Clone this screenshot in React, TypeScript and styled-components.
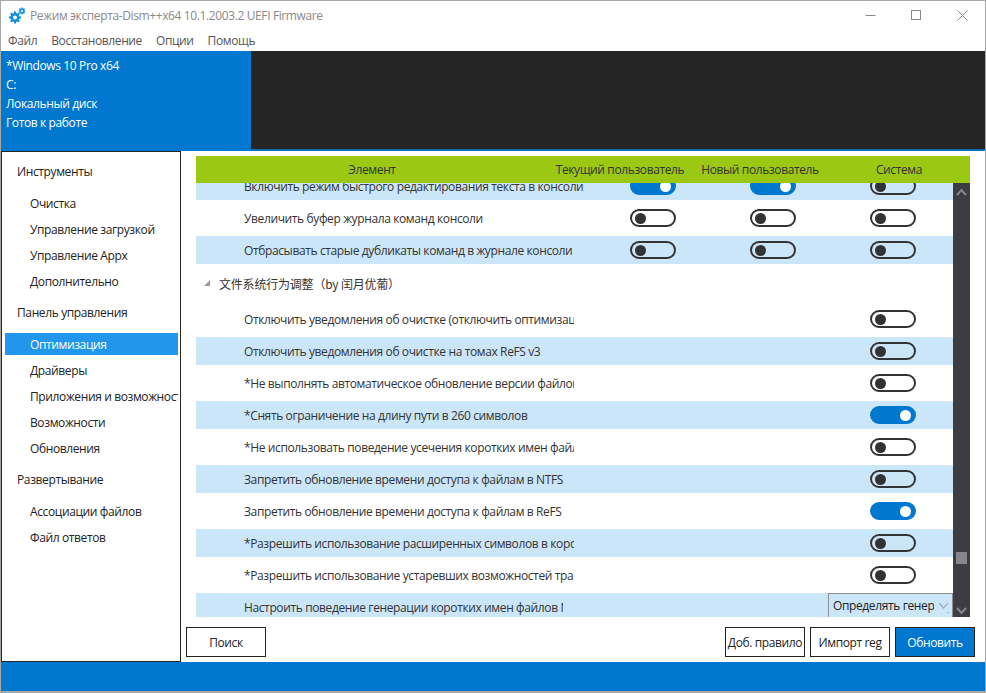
import React from "react";
import styled, { createGlobalStyle } from "styled-components";

const Global = createGlobalStyle`
  html, body { margin: 0; padding: 0; background: #fff; }
  body { font-family: "Open Sans", "Noto Sans", "Noto Sans CJK SC", sans-serif; font-size: 12px; letter-spacing: -0.38px; color: #222; overflow: hidden; }
  * { box-sizing: border-box; }
`;

const Win = styled.div`
  width: 986px; height: 693px; display: flex; flex-direction: column;
  border: 1px solid #a8a8a8; border-width: 1px 1px 2px 1px; background: #fff; overflow: hidden;
`;
const TitleBar = styled.div`
  height: 29px; display: flex; align-items: center; padding-left: 8px; flex: none; color: #8a8a8a;
`;
const TitleText = styled.span`margin-left: 4px;`;
const WinButtons = styled.div`margin-left: auto; display: flex; align-items: center;`;
const WinBtn = styled.div`width: 46px; height: 29px; display: flex; align-items: center; justify-content: center;`;
const Menu = styled.div`height: 20px; display: flex; gap: 14px; padding-left: 7px; align-items: center; flex: none; color: #555;`;
const Info = styled.div`
  height: 98px; flex: none; margin-top: 1px; display: flex; background: #252526;
`;
const InfoBlue = styled.div`
  width: 250px; background: #0078d0; color: #fff; padding: 5px 0 0 5px; display: flex; flex-direction: column;
`;
const InfoLine = styled.div`height: 19px; line-height: 19px;`;
const BlueLine = styled.div`height: 2px; flex: none; background: linear-gradient(90deg, #0078d0 250px, #0f6fb4 250px);`;
const Middle = styled.div`flex: 1; display: flex; min-height: 0;`;
const Side = styled.nav`
  width: 180px; flex: none; border: 1px solid #262626; padding: 7px 2px 0 3px; display: flex; flex-direction: column;
`;
const SideGroup = styled.div<{ $first?: boolean }>`
  height: 26px; line-height: 26px; padding-left: 12px; flex: none;
  margin-top: ${p => (p.$first ? 0 : 8)}px; margin-bottom: 3px;
`;
const SideItem = styled.div<{ $active?: boolean }>`
  height: 22px; line-height: 23px; margin-top: 4px; padding-left: 25px; white-space: nowrap; overflow: hidden; flex: none;
  background: ${p => (p.$active ? "#2196ea" : "transparent")}; color: ${p => (p.$active ? "#fff" : "#222")};
`;
const Main = styled.div`flex: 1; min-width: 0; display: flex; flex-direction: column; padding: 5px 10px 0 15px;`;
const Head = styled.div`
  height: 27px; flex: none; width: 774px; background: #9bc813; display: grid; grid-template-columns: 352px 144px 136px 142px; align-items: center; color: #333; text-align: center;
`;
const HeadCell = styled.span`white-space: nowrap;`;
const Body = styled.div`height: 434px; flex: none; width: 774px; display: flex; overflow: hidden; position: relative;`;
const List = styled.div`width: 757px; flex: none; overflow: hidden;`;
const Rows = styled.div`margin-top: -11px;`;
const Row = styled.div<{ $blue?: boolean }>`
  height: 28px; margin-bottom: 4px; display: grid; grid-template-columns: 397px 120px 120px 120px; align-items: center;
  background: ${p => (p.$blue ? "#cce6f9" : "#fff")}; position: relative;
`;
const RowText = styled.div<{ $w?: number }>`
  margin-left: 48px; width: ${p => p.$w ?? 330}px; overflow: hidden; white-space: nowrap; color: #333;
`;
const Cell = styled.div`display: flex; justify-content: center;`;
const Sw = styled.div<{ $on?: boolean }>`
  width: 46px; height: 18px; border-radius: 9px; display: flex; align-items: center; padding: 0 3px;
  border: 2px solid ${p => (p.$on ? "#0078d0" : "#333")};
  background: ${p => (p.$on ? "#0078d0" : "transparent")};
  justify-content: ${p => (p.$on ? "flex-end" : "flex-start")};
`;
const Knob = styled.div<{ $on?: boolean }>`
  width: 11px; height: 11px; border-radius: 50%; background: ${p => (p.$on ? "#fff" : "#333")};
`;
const GroupRow = styled.div`
  height: 36px; margin-bottom: 4px; margin-top: -3px; display: flex; align-items: center; padding-left: 7px; gap: 8px; color: #333;
  font-family: "Noto Sans CJK SC", "Open Sans", sans-serif; letter-spacing: -0.2px;
`;
const Combo = styled.div`
  position: absolute; right: 0; top: 0; width: 125px; height: 24px; border: 1px solid #8e8e8e; border-width: 1px 1px 0 1px;
  display: flex; align-items: center; padding-left: 4px; color: #222; white-space: nowrap; overflow: hidden;
`;
const ComboChevron = styled.svg`position: absolute; right: 0; top: 6px; background: #cce6f9;`;
const Scroll = styled.div`
  width: 17px; flex: none; background: #3c3c41; position: relative;
`;
const ThumbUp = styled.svg`position: absolute; left: 3px; top: 5px;`;
const ThumbDown = styled.svg`position: absolute; left: 3px; bottom: 2px;`;
const Thumb = styled.div`position: absolute; left: 3px; top: 369px; width: 11px; height: 12px; background: #86868a;`;
const Actions = styled.div`display: flex; margin: 10px 0 0 -10px; gap: 5px; flex: none;`;
const Btn = styled.div<{ $primary?: boolean }>`
  width: 80px; height: 30px; border: 1px solid #222; display: flex; align-items: center; justify-content: center; white-space: nowrap;
  background: ${p => (p.$primary ? "#0078d0" : "#fff")}; color: ${p => (p.$primary ? "#fff" : "#222")};
`;
const Spacer = styled.div`flex: 1;`;
const Footer = styled.div`height: 29px; flex: none; background: #0078d0;`;

const Gear = () => (
  <svg width="17" height="17" viewBox="0 0 17 17" fill="none">
    <circle cx="6" cy="10.500" r="3.300" stroke="#0f8fdc" strokeWidth="2.600" />
    <path stroke="#0f8fdc" strokeWidth="2" d="M6 4.500v2M6 14.500v2M0 10.500h2M10 10.500h2M1.800 6.300l1.400 1.400M8.800 13.300l1.400 1.400M1.800 14.700l1.400-1.400M8.800 7.700l1.400-1.400" />
    <circle cx="13" cy="4" r="1.900" stroke="#0f8fdc" strokeWidth="1.600" />
    <path stroke="#0f8fdc" strokeWidth="1.200" d="M13 .5v1.200M13 6.300v1.200M9.500 4h1.200M15.300 4h1.200M10.500 1.500l.9.9M14.600 5.600l.9.9M10.500 6.500l.9-.9M14.600 2.400l.9-.9" />
  </svg>
);

const T = ({ on }: { on?: boolean }) => (
  <Cell><Sw $on={on}><Knob $on={on} /></Sw></Cell>
);

const late: [string, boolean, boolean][] = [
  ["Отключить уведомления об очистке (отключить оптимизацию диска)", false, false],
  ["Отключить уведомления об очистке на томах ReFS v3", true, false],
  ["*Не выполнять автоматическое обновление версии файловой системы", false, false],
  ["*Снять ограничение на длину пути в 260 символов", true, true],
  ["*Не использовать поведение усечения коротких имен файлов", false, false],
  ["Запретить обновление времени доступа к файлам в NTFS", true, false],
  ["Запретить обновление времени доступа к файлам в ReFS", false, true],
  ["*Разрешить использование расширенных символов в коротких именах", true, false],
  ["*Разрешить использование устаревших возможностей транзакций", false, false],
];

export default function App() {
  return (
    <Win>
      <Global />
      <TitleBar>
        <Gear />
        <TitleText>Режим эксперта-Dism++x64 10.1.2003.2 UEFI Firmware</TitleText>
        <WinButtons>
          <WinBtn><svg width="11" height="11" viewBox="0 0 11 11"><path d="M0.500 5.500h10" stroke="#888" /></svg></WinBtn>
          <WinBtn><svg width="11" height="11" viewBox="0 0 11 11"><rect x=".5" y=".5" width="9" height="9" fill="none" stroke="#888" /></svg></WinBtn>
          <WinBtn><svg width="11" height="11" viewBox="0 0 11 11"><path d="M.5.5l10 10M10.500.5l-10 10" stroke="#888" /></svg></WinBtn>
        </WinButtons>
      </TitleBar>
      <Menu>
        <span>Файл</span><span>Восстановление</span><span>Опции</span><span>Помощь</span>
      </Menu>
      <Info>
        <InfoBlue>
          <InfoLine>*Windows 10 Pro x64</InfoLine>
          <InfoLine>C:</InfoLine>
          <InfoLine>Локальный диск</InfoLine>
          <InfoLine>Готов к работе</InfoLine>
        </InfoBlue>
      </Info>
      <BlueLine />
      <Middle>
        <Side>
          <SideGroup $first>Инструменты</SideGroup>
          <SideItem>Очистка</SideItem>
          <SideItem>Управление загрузкой</SideItem>
          <SideItem>Управление Appx</SideItem>
          <SideItem>Дополнительно</SideItem>
          <SideGroup>Панель управления</SideGroup>
          <SideItem $active>Оптимизация</SideItem>
          <SideItem>Драйверы</SideItem>
          <SideItem>Приложения и возможности</SideItem>
          <SideItem>Возможности</SideItem>
          <SideItem>Обновления</SideItem>
          <SideGroup>Развертывание</SideGroup>
          <SideItem>Ассоциации файлов</SideItem>
          <SideItem>Файл ответов</SideItem>
        </Side>
        <Main>
          <Head>
            <HeadCell>Элемент</HeadCell>
            <HeadCell>Текущий пользователь</HeadCell>
            <HeadCell>Новый пользователь</HeadCell>
            <HeadCell>Система</HeadCell>
          </Head>
          <Body>
            <List>
              <Rows>
                <Row $blue><RowText $w={345}>Включить режим быстрого редактирования текста в консоли</RowText><T on /><T on /><T /></Row>
                <Row><RowText $w={345}>Увеличить буфер журнала команд консоли</RowText><T /><T /><T /></Row>
                <Row $blue><RowText $w={345}>Отбрасывать старые дубликаты команд в журнале консоли</RowText><T /><T /><T /></Row>
                <GroupRow>
                  <svg width="8" height="8" viewBox="0 0 8 8"><path d="M7 1v6H1z" fill="#9a9a9a" /></svg>
                  <span>文件系统行为调整（by 闰月优葡）</span>
                </GroupRow>
                {late.map(([t, blue, on]) => (
                  <Row key={t} $blue={blue}>
                    <RowText>{t}</RowText><span /><span /><T on={on} />
                  </Row>
                ))}
                <Row $blue>
                  <RowText $w={319}>Настроить поведение генерации коротких имен файлов NTFS</RowText>
                  <Combo>
                    Определять генерацию
                    <ComboChevron width="18" height="12" viewBox="0 0 18 12"><path d="M5 3l4.500 5 4.500-5" fill="none" stroke="#9fb0bd" strokeWidth="1.300" /></ComboChevron>
                  </Combo>
                </Row>
              </Rows>
            </List>
            <Scroll>
              <ThumbUp width="11" height="9" viewBox="0 0 11 9"><path d="M1 7l4.500-5 4.500 5" fill="none" stroke="#86868a" strokeWidth="2" /></ThumbUp>
              <Thumb />
              <ThumbDown width="11" height="9" viewBox="0 0 11 9"><path d="M1 2l4.500 5 4.500-5" fill="none" stroke="#86868a" strokeWidth="2" /></ThumbDown>
            </Scroll>
          </Body>
          <Actions>
            <Btn>Поиск</Btn>
            <Spacer />
            <Btn>Доб. правило</Btn>
            <Btn>Импорт reg</Btn>
            <Btn $primary>Обновить</Btn>
          </Actions>
        </Main>
      </Middle>
      <Footer />
    </Win>
  );
}
